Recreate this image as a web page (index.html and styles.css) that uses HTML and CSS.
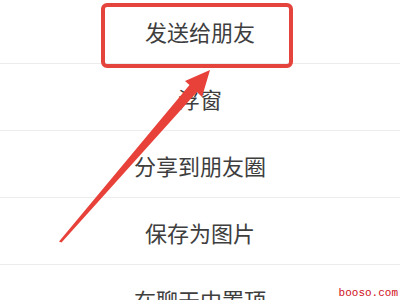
FILE: index.html
```
<!DOCTYPE html>
<html lang="zh">
<head>
<meta charset="utf-8">
<link rel="stylesheet" href="styles.css">
</head>
<body>
<div class="screen">
  <ul class="menu">
    <li class="item">发送给朋友</li>
    <li class="item">浮窗</li>
    <li class="item">分享到朋友圈</li>
    <li class="item">保存为图片</li>
    <li class="item">在聊天中置顶</li>
  </ul>
  <div class="highlight"></div>
  <svg class="arrow" width="400" height="300" viewBox="0 0 400 300">
    <polygon points="210,70 185,81 189.5,85 59,241.5 61.5,242.5 197,92 202,97" fill="#e8413a"/>
  </svg>
  <div class="watermark">booso.com</div>
</div>
</body>
</html>
```
FILE: styles.css
```
html, body {
  margin: 0;
  padding: 0;
  background: #fff;
}
.screen {
  position: relative;
  width: 400px;
  height: 300px;
  overflow: hidden;
  background: #fff;
}
.menu {
  list-style: none;
  margin: -3px 0 0 0;
  padding: 0;
}
.item {
  height: 67px;
  box-sizing: border-box;
  border-bottom: 1px solid #ececec;
  display: flex;
  align-items: center;
  justify-content: center;
  font-family: "Noto Sans CJK SC", "Noto Sans", sans-serif;
  font-size: 22px;
  color: #3e3e3e;
  padding-top: 1px;
}
.highlight {
  position: absolute;
  left: 101px;
  top: 3px;
  width: 192px;
  height: 65px;
  box-sizing: border-box;
  border: 4px solid #e5443d;
  border-radius: 6px;
}
.arrow {
  position: absolute;
  left: 0;
  top: 0;
}
.watermark {
  position: absolute;
  right: 2px;
  bottom: 1px;
  font-family: "Liberation Mono", monospace;
  font-size: 11px;
  color: #d0101a;
  line-height: 12px;
}
```
